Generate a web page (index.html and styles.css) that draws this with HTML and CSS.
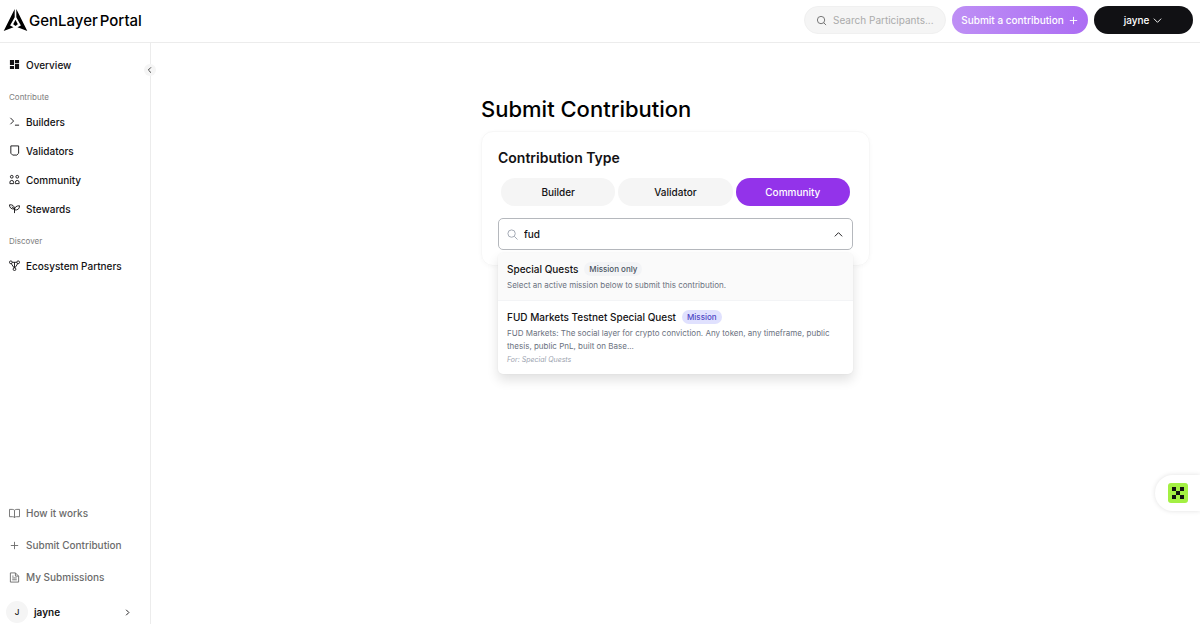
FILE: index.html
```html
<!DOCTYPE html>
<html lang="en">
<head>
    <meta charset="UTF-8">
    <meta name="viewport" content="width=device-width, initial-scale=1.0">
    <title>GenLayer Portal - Submit Contribution</title>
    <link rel="stylesheet" href="styles.css">
</head>
<body>
    <header class="topbar">
        <a class="brand" href="#">
            <svg class="brand-mark" viewBox="0 0 24 24" fill="currentColor">
                <path d="M11.2 1v8.2L6.6 17.4l3.4 1.8L.2 23z"/>
                <path d="M12.8 1v8.2l4.6 8.2-3.4 1.8 9.800 3.8z"/>
                <path d="M12 11.8l2.3 4.500-2.3 1.7-2.3-1.7z"/>
            </svg>
            <span class="brand-name"><span>GenLayer</span><span>Portal</span></span>
        </a>
        <div class="topbar-actions">
            <label class="search">
                <svg class="icon" viewBox="0 0 24 24"><circle cx="11" cy="11" r="8"/><path d="M17 17l5 5"/></svg>
                <input type="text" placeholder="Search Participants..." aria-label="Search participants">
            </label>
            <button class="btn btn-submit">Submit a contribution
                <svg class="icon" viewBox="0 0 24 24"><path d="M12 4v16M4 12h16"/></svg>
            </button>
            <button class="btn btn-user">jayne
                <svg class="icon" viewBox="0 0 24 24"><path d="M4 8l8 8 8-8"/></svg>
            </button>
        </div>
    </header>

    <div class="layout">
        <aside class="sidebar">
            <button class="collapse" aria-label="Collapse sidebar">
                <svg viewBox="0 0 24 24"><path d="M15 4l-8 8 8 8"/></svg>
            </button>
            <nav class="nav">
                <a class="nav-item" href="#">
                    <svg class="icon solid" viewBox="0 0 24 24"><path d="M2 2h9v11H2zM2 15h9v7H2zM13 2h9v7h-9zM13 11h9v11h-9z"/></svg>
                    Overview
                </a>
                <div class="nav-label">Contribute</div>
                <a class="nav-item" href="#">
                    <svg class="icon" viewBox="0 0 24 24"><path d="M3 4l7 7-7 7M13 20h9"/></svg>
                    Builders
                </a>
                <a class="nav-item" href="#">
                    <svg class="icon" viewBox="0 0 24 24"><path d="M4 2h17v16l-4 4h-9l-4-4z"/></svg>
                    Validators
                </a>
                <a class="nav-item" href="#">
                    <svg class="icon" viewBox="0 0 24 24"><circle cx="6" cy="6" r="3"/><circle cx="18" cy="6" r="3"/><path d="M2 21v-3q0-4 4-4t4 4v3zM14 21v-3q0-4 4-4t4 4v3z"/></svg>
                    Community
                </a>
                <a class="nav-item" href="#">
                    <svg class="icon" viewBox="0 0 24 24"><path d="M12 22v-9M12 13C5 14 1 10 1 4c6-1 11 2 11 9zM12 15c0-6 4-9 11-9 0 7-4 10-11 9zM6 8l6 5"/></svg>
                    Stewards
                </a>
                <div class="nav-label">Discover</div>
                <a class="nav-item" href="#">
                    <svg class="icon" viewBox="0 0 24 24"><circle cx="4" cy="5" r="3"/><circle cx="20" cy="5" r="3"/><circle cx="12" cy="20" r="3"/><path d="M7 5h10M5 8l6 9M19 8l-6 9M12 5v12"/></svg>
                    Ecosystem Partners
                </a>
            </nav>
            <nav class="nav nav-bottom">
                <a class="nav-item" href="#">
                    <svg class="icon" viewBox="0 0 24 24"><path d="M12 5v16M12 5Q10 3 7 3H1v16h7q3 0 4 2 1-2 4-2h7V3h-6q-3 0-5 2z"/></svg>
                    How it works
                </a>
                <a class="nav-item" href="#">
                    <svg class="icon" viewBox="0 0 24 24"><path d="M12 4v16M4 12h16"/></svg>
                    Submit Contribution
                </a>
                <a class="nav-item" href="#">
                    <svg class="icon" viewBox="0 0 24 24"><path d="M3 2h11l7 7v13H3zM14 2v7h7M7 13h10M7 17h10M7 9h3"/></svg>
                    My Submissions
                </a>
                <a class="profile" href="#">
                    <span class="avatar">J</span>
                    <span class="profile-name">jayne</span>
                    <svg class="icon" viewBox="0 0 24 24"><path d="M9 6l6 6-6 6"/></svg>
                </a>
            </nav>
        </aside>

        <main class="main">
            <div class="content">
                <h1>Submit Contribution</h1>
                <section class="card">
                    <h2>Contribution Type</h2>
                    <div class="tabs">
                        <button class="tab">Builder</button>
                        <button class="tab">Validator</button>
                        <button class="tab active">Community</button>
                    </div>
                    <div class="picker">
                        <label class="picker-field">
                            <svg class="icon muted" viewBox="0 0 24 24"><circle cx="10" cy="10" r="8"/><path d="M16 16l7 7"/></svg>
                            <input type="text" value="fud" aria-label="Contribution type">
                            <svg class="icon" viewBox="0 0 24 24"><path d="M4 16l8-8 8 8"/></svg>
                        </label>
                        <div class="dropdown">
                            <div class="option option-group">
                                <div class="option-title">Special Quests <span class="badge">Mission only</span></div>
                                <p>Select an active mission below to submit this contribution.</p>
                            </div>
                            <div class="option">
                                <div class="option-title">FUD Markets Testnet Special Quest <span class="badge badge-mission">Mission</span></div>
                                <p>FUD Markets: The social layer for crypto conviction. Any token, any timeframe, public thesis, public PnL, built on Base...</p>
                                <p class="option-for">For: Special Quests</p>
                            </div>
                        </div>
                    </div>
                </section>
            </div>
        </main>
    </div>

    <button class="widget" aria-label="Open widget">
        <svg viewBox="0 0 20 20">
            <rect width="20" height="20" rx="3" fill="#a3f043"/>
            <path fill="#111" d="M4 4h4v4H4zM12 4h4v4h-4zM8 8h4v4H8zM4 12h4v4H4zM12 12h4v4h-4z"/>
        </svg>
    </button>
</body>
</html>
```
FILE: styles.css
```css
:root {
    --text: #131214;
    --gray: #6b6b6b;
    --slate: #6b7280;
    --line: #ececec;
    --soft: #f5f5f5;
    --purple: #9333ea;
}
* {
    box-sizing: border-box;
}
body {
    margin: 0;
    min-height: 100vh;
    display: flex;
    flex-direction: column;
    font-family: Inter, "Liberation Sans", sans-serif;
    font-size: 10px;
    color: var(--text);
    background: #fff;
}
a {
    color: inherit;
    text-decoration: none;
}
button, input {
    font: inherit;
    color: inherit;
    border: none;
    background: none;
    padding: 0;
}
button {
    cursor: pointer;
}
h1, h2, p {
    margin: 0;
}
.icon {
    width: 11px;
    height: 11px;
    flex-shrink: 0;
    fill: none;
    stroke: currentColor;
    stroke-width: 2;
}
.icon.solid {
    fill: currentColor;
    stroke: none;
}
.icon.muted {
    color: #9ca3af;
}

/* Top bar */
.topbar {
    display: flex;
    align-items: center;
    justify-content: space-between;
    height: 43px;
    padding: 0 7px 2px 3px;
    border-bottom: 1px solid var(--line);
}
.brand {
    display: flex;
    align-items: center;
    gap: 1px;
    color: #000;
}
.brand-mark {
    width: 25px;
    height: 24px;
}
.brand-name {
    display: flex;
    gap: 2px;
    font-size: 15px;
    font-weight: 500;
}
.topbar-actions {
    display: flex;
    gap: 6px;
}
.search {
    display: flex;
    align-items: center;
    gap: 6px;
    width: 142px;
    height: 28px;
    padding: 0 6px 0 11px;
    border: 1px solid #f0f0f0;
    border-radius: 14px;
    background: var(--soft);
    color: var(--gray);
}
.search input {
    width: 100%;
    min-width: 0;
    outline: none;
}
.search input::placeholder {
    color: #ababab;
}
.btn {
    display: flex;
    align-items: center;
    justify-content: center;
    height: 28px;
    border-radius: 14px;
    color: #fff;
    font-weight: 500;
}
.btn-submit {
    gap: 4px;
    width: 136px;
    background: linear-gradient(90deg, #be8ff5, #ac6df3);
}
.btn-user {
    gap: 3px;
    width: 99px;
    background: #111114;
}

/* Sidebar */
.layout {
    flex: 1;
    display: flex;
}
.sidebar {
    position: relative;
    display: flex;
    flex-direction: column;
    justify-content: space-between;
    width: 151px;
    padding: 7px 0 1px;
    border-right: 1px solid var(--line);
}
.collapse {
    position: absolute;
    top: 21px;
    right: -6px;
    display: flex;
    align-items: center;
    justify-content: center;
    width: 12px;
    height: 12px;
    border-radius: 50%;
    background: var(--soft);
}
.collapse svg {
    width: 8px;
    height: 8px;
    fill: none;
    stroke: #444;
    stroke-width: 3;
}
.nav {
    display: flex;
    flex-direction: column;
}
.nav-item {
    display: flex;
    align-items: center;
    gap: 6px;
    height: 29px;
    padding-left: 9px;
    font-weight: 500;
}
.nav-label {
    padding: 10px 9px 2px;
    font-size: 8px;
    line-height: 16px;
    color: #7d7d7d;
}
.nav-bottom .nav-item {
    height: 32px;
    color: var(--gray);
}
.profile {
    display: flex;
    align-items: center;
    gap: 6px;
    padding: 8px 17px 0 6px;
}
.avatar {
    width: 22px;
    height: 22px;
    border-radius: 50%;
    background: var(--soft);
    font-size: 8px;
    font-weight: 500;
    line-height: 22px;
    text-align: center;
}
.profile-name {
    flex: 1;
    font-weight: 600;
}

/* Form */
.main {
    flex: 1;
    padding: 52px 16px;
}
.content {
    max-width: 389px;
    margin: 0 auto;
}
h1 {
    font-size: 22px;
    font-weight: 500;
    line-height: 28px;
    color: #000;
}
.card {
    margin-top: 8px;
    padding: 17px 16px 15px;
    border: 1px solid #f7f7f7;
    border-radius: 12px;
    box-shadow: 0 1px 4px rgba(0, 0, 0, 0.03);
}
h2 {
    font-size: 14px;
    font-weight: 600;
    line-height: 18px;
}
.tabs {
    display: flex;
    gap: 3px;
    margin-top: 8px;
    padding: 3px;
    border-radius: 17px;
}
.tab {
    flex: 1;
    height: 28px;
    border-radius: 14px;
    background: var(--soft);
    font-weight: 500;
}
.tab.active {
    background: var(--purple);
    color: #fff;
}
.picker {
    position: relative;
    margin-top: 9px;
}
.picker-field {
    display: flex;
    align-items: center;
    gap: 6px;
    height: 32px;
    padding: 0 8px;
    border: 1px solid #b5b8bd;
    border-radius: 5px;
}
.picker-field input {
    flex: 1;
    min-width: 0;
    outline: none;
    font-weight: 500;
}
.dropdown {
    position: absolute;
    top: 100%;
    left: 0;
    right: 0;
    margin-top: 3px;
    border-radius: 5px;
    overflow: hidden;
    background: #fff;
    box-shadow: 0 6px 12px rgba(0, 0, 0, 0.12), 0 0 2px rgba(0, 0, 0, 0.06);
}
.option {
    padding: 8px 9px;
}
.option-group {
    background: #fafafa;
    border-bottom: 1px solid #f3f4f6;
}
.option-title {
    display: flex;
    align-items: center;
    gap: 6px;
    height: 16px;
    font-weight: 500;
}
.option p {
    margin-top: 2px;
    font-size: 8px;
    line-height: 13px;
    color: var(--slate);
}
.option .option-for {
    margin-top: 0;
    font-size: 7px;
    font-style: italic;
    color: #9ca3af;
}
.badge {
    padding: 0 5px;
    border-radius: 8px;
    background: #f3f4f6;
    color: #4b5563;
    font-size: 8px;
    line-height: 14px;
}
.badge-mission {
    background: #e0e1fe;
    color: #4f46c5;
}

/* Floating widget on the right edge */
.widget {
    position: fixed;
    top: 475px;
    right: 0;
    width: 45px;
    height: 36px;
    padding: 8px 12px 8px 13px;
    border-radius: 18px 0 0 18px;
    background: #fff;
    box-shadow: 0 0 5px rgba(0, 0, 0, 0.12);
}
.widget svg {
    display: block;
    width: 20px;
    height: 20px;
}
```
